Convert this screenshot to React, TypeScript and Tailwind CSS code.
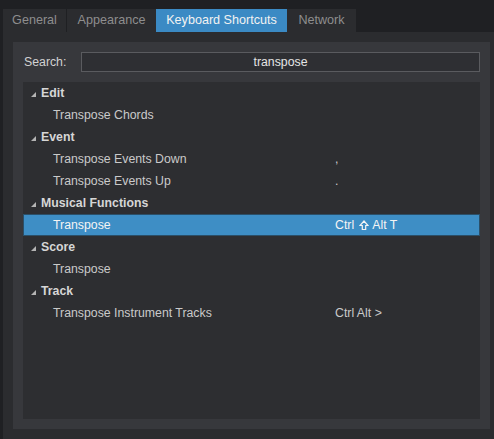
import React from "react";

type Item = { label: string; shortcut?: React.ReactNode; selected?: boolean };
type Group = { name: string; items: Item[] };

// Hollow "shift" arrow drawn as a small outline glyph
const shiftKey = (
  <svg width="10" height="10" viewBox="0 0 10 10" className="inline-block align-[-1px] mx-[1px]">
    <path
      d="M5 1 L9 5.5 L6.7 5.5 L6.7 9.5 L3.3 9.5 L3.3 5.5 L1 5.5 Z"
      fill="none"
      stroke="#f4f4f4"
      strokeWidth="1.2"
      strokeLinejoin="miter"
    />
  </svg>
);

const groups: Group[] = [
  { name: "Edit", items: [{ label: "Transpose Chords" }] },
  {
    name: "Event",
    items: [
      { label: "Transpose Events Down", shortcut: "," },
      { label: "Transpose Events Up", shortcut: "." },
    ],
  },
  {
    name: "Musical Functions",
    items: [
      {
        label: "Transpose",
        shortcut: (
          <>
            Ctrl {shiftKey} Alt T
          </>
        ),
        selected: true,
      },
    ],
  },
  { name: "Score", items: [{ label: "Transpose" }] },
  {
    name: "Track",
    items: [{ label: "Transpose Instrument Tracks", shortcut: "Ctrl Alt >" }],
  },
];

const tabs = [
  { label: "General", w: "w-[64px]", active: false },
  { label: "Appearance", w: "w-[89px]", active: false },
  { label: "Keyboard Shortcuts", w: "w-[131px]", active: true },
  { label: "Network", w: "w-[69px]", active: false },
];

function Expander() {
  return (
    <svg width="5" height="5" viewBox="0 0 5 5" className="block">
      <polygon points="5,0 5,5 0,5" fill="#b4b4b4" />
    </svg>
  );
}

export default function App() {
  return (
    <div
      className="w-[494px] h-[439px] flex bg-[#2b2c2f] overflow-hidden text-[12.3px]"
      style={{ fontFamily: '"Liberation Sans", Arial, sans-serif' }}
    >
      <div className="w-[3px] bg-[#1f2023]" />
      <div className="flex-1 flex flex-col">
        {/* tab strip */}
        <div className="h-[32px] bg-[#1f2023] flex items-end">
          {tabs.map((t, i) => (
            <div
              key={t.label}
              className={`${t.w} h-[23px] flex items-center justify-center text-[12.6px] ${
                t.active ? "bg-[#3b8ac4] text-[#f2f2f2]" : "bg-[#2b2c2f] text-[#8e8e8e]"
              } ${i === 0 ? "border-r border-[#1f2023]" : ""}`}
            >
              {t.label}
            </div>
          ))}
        </div>

        {/* page body */}
        <div className="flex-1 pt-[10px] pl-[10px] pr-[4px] pb-[10px]">
          <div className="h-full bg-[#37383c] p-[10px] flex flex-col">
            <div className="flex items-center h-[20px]">
              <div className="w-[58px] pl-[1px] text-[#d2d2d2]">Search:</div>
              <div className="flex-1 h-[20px] border border-[#5a5b5f] bg-[#2e2f33] flex items-center justify-center text-[#e4e4e4]">
                transpose
              </div>
            </div>

            <div className="mt-[10px] flex-1 bg-[#2d2e31]">
              {groups.map((g) => (
                <div key={g.name}>
                  <div className="h-[22px] flex items-center pt-[1px]">
                    <div className="w-[18px] pl-[8px] pt-[1px]">
                      <Expander />
                    </div>
                    <span className="font-bold text-[#d6d6d6]">{g.name}</span>
                  </div>
                  {g.items.map((it) => (
                    <div
                      key={it.label}
                      className={`h-[22px] flex items-center ${
                        it.selected
                          ? "bg-[#3e8ec5] border border-[#2b4f68] text-[#f4f4f4]"
                          : "text-[#cacaca] pt-[1px]"
                      }`}
                    >
                      <div className={`${it.selected ? "w-[311px] pl-[29px]" : "w-[312px] pl-[30px]"}`}>
                        {it.label}
                      </div>
                      <div className="whitespace-pre">{it.shortcut}</div>
                    </div>
                  ))}
                </div>
              ))}
            </div>
          </div>
        </div>
      </div>
    </div>
  );
}
